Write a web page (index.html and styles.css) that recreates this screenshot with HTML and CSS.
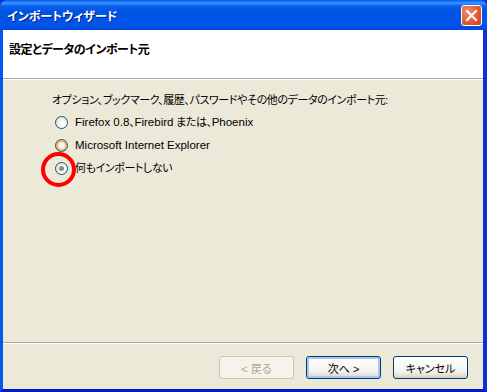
FILE: index.html
```html
<!DOCTYPE html>
<html lang="ja">
<head>
    <meta charset="UTF-8">
    <title>インポートウィザード</title>
    <link rel="stylesheet" href="styles.css">
</head>
<body>
    <div class="window">
        <div class="titlebar">
            <span class="title">インポートウィザード</span>
            <span class="close">
                <svg width="13" height="13" viewBox="0 0 13 13">
                    <path d="M2 2 L11 11 M11 2 L2 11" stroke="#fff" stroke-width="2" stroke-linecap="square"/>
                </svg>
            </span>
        </div>
        <div class="frame">
            <div class="header">設定とデータのインポート元</div>
            <div class="main">
                <div class="intro">オプション、ブックマーク、履歴、パスワードやその他のデータのインポート元:</div>
                <div class="options">
                    <label class="option"><span class="radio"></span><span><span class="lat">Firefox 0.8</span>、<span class="lat">Firebird</span> または、<span class="lat">Phoenix</span></span></label>
                    <label class="option"><span class="radio hover"></span><span class="lat">Microsoft Internet Explorer</span></label>
                    <label class="option"><span class="radio checked"></span><span>何もインポートしない</span></label>
                </div>
                <div class="mark"></div>
            </div>
            <div class="footer">
                <button class="btn" disabled>&lt; 戻る</button>
                <button class="btn default">次へ &gt;</button>
                <button class="btn cancel">キャンセル</button>
            </div>
        </div>
    </div>
</body>
</html>
```

FILE: styles.css
```css
body {
    margin: 0;
    background: #ece9d8;
    font-family: "Liberation Sans", "Noto Sans CJK JP", sans-serif;
    font-size: 11px;
    letter-spacing: -0.4px;
    font-feature-settings: "palt";
}
.window {
    width: 487px;
    height: 392px;
    display: flex;
    flex-direction: column;
    background: #0831d9;
}
.titlebar {
    height: 30px;
    display: flex;
    align-items: center;
    justify-content: space-between;
    padding: 0 5px 0 7px;
    border-radius: 7px 7px 0 0;
    background: linear-gradient(#0058ee 0, #3d95ff 3px, #0a5fef 6px, #0054e3 12px, #0055eb 24px, #0048dd 30px);
    box-sizing: border-box;
}
.title {
    color: #fff;
    font-weight: bold;
    font-size: 12px;
    letter-spacing: 0;
    text-shadow: 1px 1px 0 #0a1883;
}
.close {
    width: 19px;
    height: 19px;
    display: flex;
    align-items: center;
    justify-content: center;
    border: 1px solid #fff;
    border-radius: 3px;
    background: radial-gradient(circle at 30% 30%, #f08c6c, #e0582e 60%, #c8401a);
}
.frame {
    flex: 1;
    display: flex;
    flex-direction: column;
    border-left: 3px solid #0058ee;
    border-right: 4px solid #0831d9;
    border-bottom: 3px solid #0019cf;
    background: #ece9d8;
}
.header {
    height: 49px;
    padding: 10px 0 0 6px;
    box-sizing: border-box;
    background: #fff;
    font-weight: bold;
    font-size: 12px;
    letter-spacing: -0.5px;
    border-bottom: 1px solid #aca899;
}
.main {
    flex: 1;
    position: relative;
    padding: 13px 0 0 49px;
    border-top: 1px solid #fff;
    border-bottom: 1px solid #aca899;
}
.intro {
    line-height: 14px;
}
.options {
    display: flex;
    flex-direction: column;
    gap: 9px;
    margin: 8px 0 0 3px;
}
.option {
    display: flex;
    align-items: center;
    gap: 7px;
    line-height: 14px;
}
.lat {
    font-size: 11.5px;
    letter-spacing: 0;
}
.radio {
    width: 11px;
    height: 11px;
    border: 1px solid #1c5180;
    border-radius: 50%;
    background: radial-gradient(circle at 65% 65%, #fff 20%, #dcd9cf 90%);
    position: relative;
}
.radio.hover {
    box-shadow: inset 0 0 0 2px #f4b55a;
}
.radio.checked::after {
    content: "";
    position: absolute;
    left: 3px;
    top: 3px;
    width: 5px;
    height: 5px;
    border-radius: 50%;
    background: #8c8a7f;
}
.mark {
    position: absolute;
    left: 38px;
    top: 72px;
    width: 27px;
    height: 27px;
    border: 4px solid #f00;
    border-radius: 50%;
}
.footer {
    height: 46px;
    display: flex;
    justify-content: flex-end;
    align-items: flex-start;
    gap: 12px;
    padding: 12px 15px 0 0;
    box-sizing: border-box;
    border-top: 1px solid #fff;
}
.btn {
    width: 75px;
    height: 23px;
    padding: 0;
    font: inherit;
    color: #000;
    border: 1px solid #003c74;
    border-radius: 3px;
    background: linear-gradient(#fff, #f4f3ee 70%, #d6d0c5);
}
.btn.default {
    box-shadow: inset 0 0 0 2px #aac6f2;
}
.btn:disabled {
    color: #aca899;
    border-color: #c9c7ba;
    background: #f5f4ea;
}
```
